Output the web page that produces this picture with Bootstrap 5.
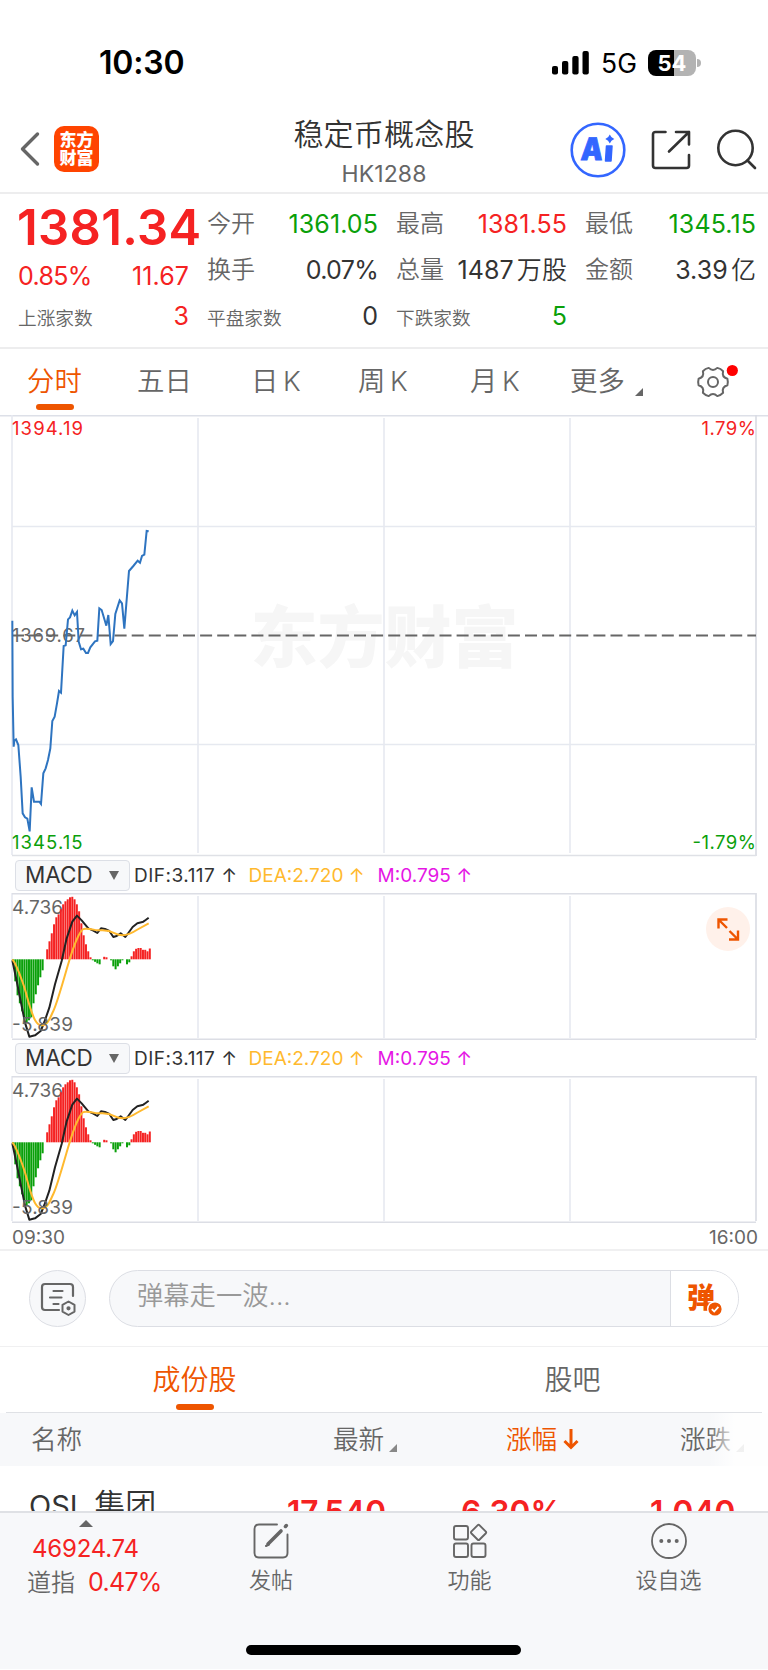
<!DOCTYPE html>
<html lang="zh-CN">
<head>
<meta charset="utf-8">
<meta name="viewport" content="width=device-width, initial-scale=1">
<title>稳定币概念股</title>
<link href="https://cdn.jsdelivr.net/npm/bootstrap@5.3.0/dist/css/bootstrap.min.css" rel="stylesheet">
<style>
:root{--up:#f52222;--down:#0aa00a;--accent:#ee5500;--ink:#333;--sub:#666;--panel:#f7f8fa}
body{font-family:Inter,"Noto Sans CJK SC",sans-serif;width:768px;height:1670px;overflow:hidden;background:#fff;color:var(--ink);line-height:1}
svg{display:block;flex:none}
.up{color:var(--up)}.down{color:var(--down)}.sub{color:var(--sub)}.accent{color:var(--accent)}
.cjk{font-weight:350}
.status{height:113px;padding:12px 67px 0 99px;color:#000}
.clock{font-size:32px;font-weight:600;letter-spacing:-.2px}
.net{font-size:26.5px;margin:2px 11px 0 12px;letter-spacing:0}
.battery{width:48px;height:26px;border-radius:8px;background:linear-gradient(90deg,#000 54%,#b3b3b3 54%);color:#fff;font-size:22px;font-weight:700}
.tip{width:4px;height:8px;border-radius:0 4px 4px 0;background:#b3b3b3;margin-left:1px}
.topbar{height:81px;border-bottom:2px solid #ededee;display:grid;grid-template-columns:264px 200px 1fr;padding:0 11px 0 20px}
.brand{width:45px;height:46px;border-radius:10px;background:#ff4400;color:#fff;font-size:17px;font-weight:900;line-height:18.5px;margin-left:14px}
.name{font-size:30px;letter-spacing:.2px}
.code{font-size:23px;letter-spacing:.1px}
.quote{height:155px;padding:7px 12px 0 18px;display:grid;grid-template-columns:repeat(4,170px);grid-auto-rows:46px;column-gap:19px;border-bottom:2px solid #ededee}
.quote>div{display:flex;justify-content:space-between;align-items:center;white-space:nowrap;font-size:25px;letter-spacing:.1px;margin-right:-1px}
.quote .key{font-size:24px;color:var(--sub);font-weight:350;letter-spacing:0}
.quote .minor{font-size:18.7px;padding-top:6px;color:var(--sub);font-weight:350;letter-spacing:0}
.quote .price{font-size:49px;font-weight:600;letter-spacing:.3px;margin-left:-1px}
.quote .low{padding-top:13px}
.pct{letter-spacing:-.7px}
.periods{height:66px;font-size:27.4px;color:var(--sub);padding-left:28px;display:grid;grid-template-columns:109px 114px 107px 112px 100px 126px 1fr;word-spacing:-3px}
.periods>*{position:relative}
.bar{position:absolute;width:38px;height:6px;border-radius:3px;background:var(--accent);left:50%;transform:translateX(-50%)}
.legend{height:36px;font-size:19px;padding-left:15px}
.dif{margin-left:4px;letter-spacing:.5px}
.dea{margin-left:11px;color:#ffb92e}
.mval{margin-left:13px;color:#e516e5}
.picker{width:115px;height:31px;border:1px solid #dcdfe6;border-radius:4px;background:var(--panel);font-size:22.5px;padding:0 10px 0 9px}
.axis{height:28px;font-size:19px;padding:2px 10px 0 12px;border-bottom:2px solid #f0f0f1}
.danmu{height:96px;padding:0 29px;border-bottom:1px solid #f0f0f1}
.round{width:57px;height:57px;border:1px solid #dcdee4;background:var(--panel)}
.field{height:57px;border:1px solid #dcdee4;border-radius:29px;background:var(--panel);margin-left:23px;overflow:hidden}
.hint{font-size:26.3px;color:#999;padding-left:27px;padding-bottom:4px}
.send{width:68px;background:#fff;border-left:1px solid #dcdee4}
.sections{height:66px;margin:0 6px;border-bottom:1px solid #dfe1e5;font-size:28px}
.sections>div{position:relative}
.thead-row{height:53px;background:var(--panel);font-size:25.6px;color:var(--sub);padding-left:31px;position:relative}
.fade-out{position:absolute;right:0;top:0;bottom:0;width:60px;background:linear-gradient(90deg,rgba(255,255,255,0),rgba(255,255,255,.88) 45%)}
.cols{display:grid;grid-template-columns:302px 173px 174px 1fr}
.stock{height:45px;overflow:hidden;padding-left:29px;padding-top:24px}
.stock .num{font-size:31.6px;font-weight:600;color:var(--up);padding-top:6px}
.dock{height:158px;background:var(--panel);border-top:2px solid #dfe1e5}
.dock .lbl{font-size:22px;color:var(--sub);font-weight:350}
.home{width:275px;height:10px;border-radius:5px;background:#000;margin-left:246px}
</style>
</head>
<body>

<div class="status d-flex align-items-center">
  <span class="clock">10:30</span>
  <svg class="ms-auto" width="37" height="24" viewBox="0 0 37 24"><rect x="0" y="15" width="6" height="8.500" rx="2"/><rect x="10" y="10" width="6.300" height="13.500" rx="2"/><rect x="20.300" y="5" width="6.300" height="18.500" rx="2"/><rect x="30.500" y="0" width="6.300" height="23.500" rx="2"/></svg>
  <span class="net">5G</span>
  <span class="battery d-flex align-items-center justify-content-center">54</span><span class="tip"></span>
</div>

<header class="topbar align-items-center">
  <div class="d-flex align-items-center" style="margin-top:-7px">
    <svg width="20" height="36" viewBox="0 0 20 36" fill="none" stroke="#666" stroke-width="3.400" stroke-linecap="round" stroke-linejoin="round"><path d="M17.500 3 2.500 18l15 15"/></svg>
    <div class="brand text-center d-flex flex-column justify-content-center"><span>东方</span><span>财富</span></div>
  </div>
  <div class="text-center" style="margin-top:-1px">
    <div class="name cjk">稳定币概念股</div>
    <div class="code sub" style="margin-top:14px">HK1288</div>
  </div>
  <div class="d-flex align-items-center justify-content-end" style="margin-top:-6px">
    <svg width="56" height="56" viewBox="0 0 56 56"><circle cx="28" cy="28" r="26.300" fill="none" stroke="#36f" stroke-width="2.600"/><text x="11" y="38" font-family="Inter" font-weight="900" font-size="31" fill="#36f" stroke="#36f" stroke-width=".8" textLength="22" lengthAdjust="spacingAndGlyphs" transform="skewX(-4) translate(2 0)">A</text><path d="M36.500 24h5.500l-1 15h-5.500z" fill="#36f" stroke="#36f" stroke-width="1.500" stroke-linejoin="round"/><path d="M39.800 12.500q1.200 3.300 4.500 4.500-3.300 1.200-4.500 4.500-1.200-3.300-4.500-4.500 3.300-1.200 4.500-4.500z" fill="#36f"/></svg>
    <svg width="40" height="40" viewBox="0 0 40 40" style="margin-left:25px" fill="none" stroke="#333" stroke-width="2.600" stroke-linecap="round" stroke-linejoin="round"><path d="M14.500 2H4.500Q2 2 2 4.500v31Q2 38 4.500 38h31q2.500 0 2.500-2.500V25M25 2h13v12.500M38 2 18 21.500"/></svg>
    <svg width="41" height="41" viewBox="0 0 41 41" style="margin-left:25px" fill="none" stroke="#333" stroke-width="2.600" stroke-linecap="round"><circle cx="19.500" cy="19" r="17.200"/><path d="m31.500 31.500 7.500 7.500"/></svg>
  </div>
</header>

<section class="quote">
  <div class="up" style="padding-top:7px"><span class="price">1381.34</span></div>
  <div><span class="key">今开</span><span class="down">1361.05</span></div>
  <div><span class="key">最高</span><span class="up">1381.55</span></div>
  <div><span class="key">最低</span><span class="down">1345.15</span></div>
  <div class="up low"><span class="pct">0.85%</span><span>11.67</span></div>
  <div><span class="key">换手</span><span class="pct">0.07%</span></div>
  <div><span class="key">总量</span><span>1487<span class="cjk" style="margin-left:3px">万股</span></span></div>
  <div><span class="key">金额</span><span>3.39<span class="cjk" style="margin-left:3px">亿</span></span></div>
  <div><span class="minor">上涨家数</span><span class="up">3</span></div>
  <div><span class="minor">平盘家数</span><span>0</span></div>
  <div><span class="minor">下跌家数</span><span class="down">5</span></div>
</section>

<nav class="periods align-items-center cjk">
  <span class="accent" style="width:55px;margin-left:-1px">分时<i class="bar" style="top:36px"></i></span>
  <span>五日</span><span>日 K</span><span>周 K</span><span>月 K</span>
  <span class="d-flex align-items-end">更多<svg style="margin-left:10px" width="8" height="8"><path d="M8 0v8H0z" fill="#666"/></svg></span>
  <svg width="44" height="40" viewBox="-17 -20 44 40" fill="none" stroke="#666" stroke-width="2" stroke-linejoin="round"><path d="M14.400-3.300Q15.300 0 14.400 3.300 8.500 5 10.100 10.800 7.700 13.300 4.300 14.100 0 10 -4.300 14.100-7.700 13.300-10.100 10.800-8.500 5-14.400 3.300-15.300 0-14.400-3.300-8.500-5-10.100-10.800-7.700-13.300-4.300-14.100 0-10 4.300-14.100 7.700-13.300 10.100-10.800 8.500-5 14.400-3.300z"/><circle r="5"/><circle cx="19.300" cy="-11.500" r="5.600" fill="red" stroke="none"/></svg>
</nav>

<svg width="768" height="442" viewBox="0 0 768 442" font-family="Inter" font-size="18.500">
  <text x="384.500" y="247" text-anchor="middle" font-family="Noto Sans CJK SC" font-weight="900" font-size="67" fill="#f6f6f6">东方财富</text>
  <g fill="none" stroke="#e6e9f0" stroke-width="1.600"><path d="M0 .7H768" stroke="#dde0e8"/><path d="M12 0V440M198 3V438M384 3V438M570 3V438"/><path d="M756 0V441" stroke="#d9dbe3"/><path d="M12 111.500H756M12 329.500H756"/><path d="M12 440.500H756" stroke="#dfe1e6"/></g>
  <path d="M12 220.500H756" stroke="#666" stroke-width="2" stroke-dasharray="12 5.100"/>
  <text x="12" y="19.500" fill="#f52222" textLength="71">1394.19</text>
  <text x="12" y="226.500" fill="#666" textLength="73">1369.67</text>
  <text x="12" y="433.500" fill="#0aa00a" textLength="70.500">1345.15</text>
  <text x="756" y="19.500" fill="#f52222" text-anchor="end" textLength="54.500">1.79%</text>
  <text x="756" y="433.500" fill="#0aa00a" text-anchor="end" textLength="63.500">-1.79%</text>
  <polyline transform="translate(0 95) scale(.33333)" fill="none" stroke="#2e74c0" stroke-width="6" stroke-linejoin="miter" points="37,332 38,560 41,710 43,692 48,688 55,705 62,800 68,910 75,922 82,926 89,964 95,832 102,875 118,875 123,882 130,790 137,775 144,750 151,715 157,633 164,620 171,580 177,543 183,548 191,408 197,406 204,328 210,322 217,302 224,316 231,306 236,395 243,418 250,416 258,429 264,429 271,412 285,394 292,392 298,295 305,300 319,347 325,315 332,402 339,393 346,312 359,271 366,280 373,356 387,183 400,168 413,152 420,158 426,138 433,134 440,63 446,64"/>
</svg>

<div class="legend d-flex align-items-center">
  <div class="picker d-flex align-items-center justify-content-between"><span>MACD</span><svg width="10" height="9"><path d="M0 0h10L5 9z" fill="#666"/></svg></div>
  <span class="dif">DIF:3.117 ↑</span><span class="dea">DEA:2.720 ↑</span><span class="mval">M:0.795 ↑</span>
</div>
<div class="position-relative">
  <svg class="macd" width="768" height="147" viewBox="0 0 768 147"></svg>
  <svg class="position-absolute" style="right:18px;top:14px" width="44" height="44" viewBox="0 0 44 44"><circle cx="22" cy="22" r="22" fill="#fff1ea"/><path d="M21.500 12.500h-9V21.500M12.500 12.500l8.500 8.500M23 32.500H32V23.500M32 32.500 23.500 24" fill="none" stroke="#ee5500" stroke-width="2.400"/></svg>
</div>
<div class="legend d-flex align-items-center">
  <div class="picker d-flex align-items-center justify-content-between"><span>MACD</span><svg width="10" height="9"><path d="M0 0h10L5 9z" fill="#666"/></svg></div>
  <span class="dif">DIF:3.117 ↑</span><span class="dea">DEA:2.720 ↑</span><span class="mval">M:0.795 ↑</span>
</div>
<svg class="macd" width="768" height="147" viewBox="0 0 768 147"></svg>
<div class="axis d-flex align-items-center justify-content-between sub"><span>09:30</span><span>16:00</span></div>

<div class="danmu d-flex align-items-center">
  <div class="round rounded-circle d-flex align-items-center justify-content-center">
    <svg width="38" height="34" viewBox="0 0 38 34" fill="none" stroke="#666" stroke-width="2.200" stroke-linecap="round" stroke-linejoin="round"><path d="M20 28H6q-3 0-3-3V5q0-3 3-3h25q3 0 3 3v9M14.500 9h9M11 15.500h11.500M14.500 22h5"/><path d="m29.500 19.500 6 3.400v6.700l-6 3.400-6-3.400v-6.700z" stroke-width="2"/><circle cx="29.500" cy="26.300" r="1" fill="#666"/></svg>
  </div>
  <div class="field flex-grow-1 d-flex align-items-stretch">
    <div class="hint cjk flex-grow-1 d-flex align-items-center">弹幕走一波...</div>
    <div class="send d-flex align-items-center"><svg width="40" height="44" viewBox="0 -3 40 44" style="margin-left:15px"><text x="1" y="28" font-family="Noto Sans CJK SC" font-weight="900" font-size="28" fill="#ee5500">弹</text><circle cx="29" cy="29" r="8" fill="#fff"/><circle cx="29" cy="29" r="6.600" fill="#ee5500"/><path d="m25.800 29.200 2.400 2.300 4.200-4.600" fill="none" stroke="#fff" stroke-width="1.800"/></svg></div>
  </div>
</div>

<div class="sections d-flex cjk text-center">
  <div class="d-flex align-items-center justify-content-center" style="width:377px;padding-top:1px"><span class="accent">成份股</span><i class="bar" style="top:57px"></i></div>
  <div class="d-flex align-items-center justify-content-center sub flex-grow-1" style="padding-top:1px">股吧</div>
</div>

<div class="thead-row cols align-items-center cjk">
  <span>名称</span>
  <span class="d-flex align-items-end">最新<svg style="margin-left:5px" width="8" height="8"><path d="M8 0v8H0z" fill="#888"/></svg></span>
  <span class="accent d-flex align-items-center">涨幅<svg style="margin-left:6px" width="16" height="24" viewBox="0 0 16 24" fill="none" stroke="#ee5500" stroke-width="3"><path d="M8 1v18M1.500 13 8 19.500 14.500 13"/></svg></span>
  <span class="d-flex align-items-end">涨跌<svg style="margin-left:5px" width="8" height="8"><path d="M8 0v8H0z" fill="#888"/></svg></span>
  <div class="fade-out"></div>
</div>
<div class="stock cols">
  <span style="font-size:29px;white-space:nowrap">OSL <span class="cjk" style="font-size:31px;line-height:29px">集团</span></span>
  <span class="num" style="margin-left:-44px">17.540</span><span class="num" style="margin-left:-43px">6.30%</span><span class="num" style="margin-left:-28px">1.040</span>
</div>

<footer class="dock d-flex flex-column">
  <div class="d-flex" style="height:132px">
    <div style="width:172px;padding-top:7px">
      <svg width="14" height="7" style="margin-left:79px"><path d="M7 0l7 7H0z" fill="#666"/></svg>
      <div class="up" style="font-size:24px;letter-spacing:-.2px;margin:10px 0 0 32px">46924.74</div>
      <div class="d-flex align-items-center" style="margin:9px 0 0 27px"><span class="sub cjk" style="font-size:24px">道指</span><span class="up pct" style="font-size:25px;margin-left:13px">0.47%</span></div>
    </div>
    <div class="d-flex flex-column align-items-center" style="width:198px;padding-top:10px">
      <svg width="36" height="36" viewBox="0 0 36 36" fill="none" stroke="#666" stroke-width="1.900" stroke-linecap="round"><path d="M24 1.500H6Q1.500 1.500 1.500 6v24Q1.500 34.500 6 34.500h24q4.500 0 4.500-4.500V11.500"/><path d="M15 21 28 8" stroke-width="3.600"/><path d="m13 23 3-1.500" stroke-width="2"/><path d="m32.500 3.400.8-.8" stroke-width="3.600"/></svg>
      <span class="lbl" style="margin-top:10px">发帖</span>
    </div>
    <div class="d-flex flex-column align-items-center" style="width:199px;padding-top:10px">
      <svg width="36" height="36" viewBox="0 0 36 36" fill="none" stroke="#666" stroke-width="1.900" stroke-linejoin="round"><rect x="2" y="3" width="14" height="13.500" rx="2"/><rect x="2" y="20.500" width="14" height="13.500" rx="2"/><rect x="19.500" y="20.500" width="14" height="13.500" rx="2"/><rect x="20.800" y="3.600" width="11.500" height="11.500" rx="1.500" transform="rotate(45 26.500 9.400)"/></svg>
      <span class="lbl" style="margin-top:10px">功能</span>
    </div>
    <div class="d-flex flex-column align-items-center" style="width:199px;padding-top:10px">
      <svg width="36" height="36" viewBox="0 0 36 36"><circle cx="18" cy="18" r="17" fill="none" stroke="#666" stroke-width="1.800"/><g fill="#666"><circle cx="10.300" cy="18" r="2"/><circle cx="18" cy="18" r="2"/><circle cx="25.700" cy="18" r="2"/></g></svg>
      <span class="lbl" style="margin-top:10px">设自选</span>
    </div>
  </div>
  <div class="home"></div>
</footer>

<script src="https://cdn.jsdelivr.net/npm/bootstrap@5.3.0/dist/js/bootstrap.bundle.min.js"></script>
<script>
// MACD histogram, one value per minute, in pixels above (+) or below (-) the zero line
const hist=[-5,-22,-36,-44,-52,-59,-63,-61,-58,-44,-35,-26,-18,-11,0,10,18,26,35,42,45,50,55,58,60,62,62.5,60,55,48,36,24,15,8,2,-1,-2.5,-4,-5,0,2.5,2,0,-1,-7,-10,-7,-4,-1,0,-5,-3,3,8,10.5,11.3,11.3,9.5,9.5,8,10.8];
const zero=66.3;
let bars='';
hist.forEach((v,i)=>{ if(v) bars+=`<rect x="${(12+i*2.28).toFixed(2)}" y="${v>0?zero-v:zero}" width="2" height="${Math.abs(v)}" fill="${v>0?'#f52222':'#0aa00a'}"/>`; });
const dif='37,328 50,390 62,450 75,515 88,557 105,553 122,540 133,513 148,470 165,400 185,330 200,262 217,212 231,194 245,208 265,232 280,239 292,246 303,232 315,234 328,240 340,258 350,255 362,247 376,258 385,246 398,228 412,217 430,212 437,207 446,200';
const dea='M37 325C50 340 60 372 70 400S82 445 90 468S106 523 125 523S150 500 160 480S190 390 200 355S220 285 235 255S255 234 268 234S280 238 295 238S320 234 345 247S395 247 410 237L446 217';
document.querySelectorAll('.macd').forEach(s=>{ s.innerHTML=`
<g fill="none" stroke="#e6e9f0" stroke-width="1.600"><path d="M12 0V145M198 3V145M384 3V145M570 3V145"/><path d="M756 0V145" stroke="#d9dbe3"/><path d="M12 .8H756M12 146.200H756" stroke="#dcdee5"/></g>
<text x="12" y="21" font-family="Inter" font-size="19" fill="#666" textLength="51">4.736</text>
${bars}
<g transform="translate(0 -42) scale(.33333)" fill="none" stroke-width="6" stroke-linejoin="round"><polyline points="${dif}" stroke="#222"/><path d="${dea}" stroke="#ffb92e"/></g>
<text x="12" y="138" font-family="Inter" font-size="19" fill="#666" textLength="61">-5.839</text>`; });
</script>
</body>
</html>
